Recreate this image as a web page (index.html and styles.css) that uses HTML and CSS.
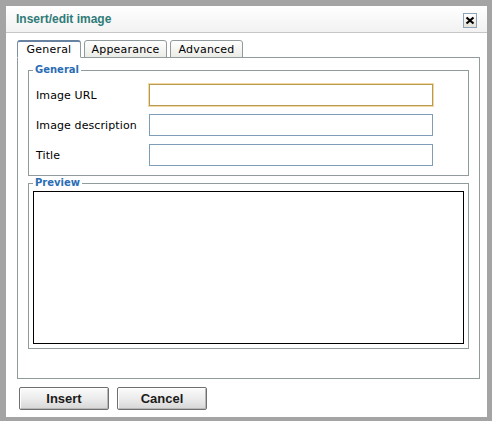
FILE: index.html
```html
<!DOCTYPE html>
<html>
<head>
<meta charset="utf-8">
<title>Insert/edit image</title>
<link rel="stylesheet" href="styles.css">
</head>
<body>
<div class="window">
  <div class="titlebar">
    <span class="title">Insert/edit image</span>
    <span class="close"><svg width="10" height="9" viewBox="0 0 10 9"><path d="M1.5 1.5 L8.5 7.5 M8.5 1.5 L1.5 7.5" stroke="#000" stroke-width="2.2" fill="none"/></svg></span>
  </div>
  <div class="body">
    <div class="tabs">
      <span class="tab tab-general active">General</span>
      <span class="tab tab-appearance">Appearance</span>
      <span class="tab tab-advanced">Advanced</span>
    </div>
    <div class="panel">
      <fieldset class="fs fs-general">
        <legend>General</legend>
        <div class="fs-body">
          <div class="row"><label>Image URL</label><input class="field focus" type="text"></div>
          <div class="row"><label>Image description</label><input class="field" type="text"></div>
          <div class="row"><label>Title</label><input class="field" type="text"></div>
        </div>
      </fieldset>
      <fieldset class="fs fs-preview-set">
        <legend>Preview</legend>
        <div class="fs-preview">
          <div class="preview-box"></div>
        </div>
      </fieldset>
    </div>
    <div class="buttons">
      <button class="btn">Insert</button>
      <button class="btn">Cancel</button>
    </div>
  </div>
</div>
</body>
</html>
```

FILE: styles.css
```css
html, body {
  margin: 0;
  padding: 0;
  background: #fff;
}
body {
  width: 494px;
  height: 424px;
  overflow: hidden;
  font-family: "DejaVu Sans", Verdana, sans-serif;
  font-size: 11px;
  color: #000;
}
.window {
  width: 481px;
  height: 411px;
  border-style: solid;
  border-color: #a4a4a4;
  border-width: 6px 5px 4px 6px;
  background: #fff;
  display: flex;
  flex-direction: column;
}
.titlebar {
  height: 26px;
  border-bottom: 1px solid #c6c6c6;
  background: linear-gradient(#ffffff, #f2f2f2);
  display: flex;
  align-items: center;
  padding: 0 10px;
}
.title {
  font-family: "Liberation Sans", Arial, sans-serif;
  font-weight: bold;
  font-size: 12px;
  color: #2f7b78;
  margin-top: -1px;
}
.close {
  margin-left: auto;
  width: 12px;
  height: 13px;
  border: 1px solid #8da3b9;
  background: linear-gradient(#ffffff, #e4e2da);
  display: flex;
  align-items: center;
  justify-content: center;
  margin-top: 2px;
}
.close svg {
  display: block;
}
.body {
  padding: 7px 7px 0 11px;
}
.tabs {
  display: flex;
  gap: 3px;
  position: relative;
  margin-bottom: -1px;
}
.tab {
  box-sizing: border-box;
  height: 18px;
  border: 1px solid #919b9c;
  border-radius: 3px 3px 0 0;
  background: linear-gradient(#ffffff, #ebebe6);
  text-align: center;
  line-height: 17px;
  letter-spacing: 0.2px;
}
.tab-general { width: 64px; }
.tab-appearance { width: 83px; }
.tab-advanced { width: 73px; }
.tab.active {
  background: #fff;
  border-top: 2px solid #6883a0;
  border-left-color: #7d91a6;
  border-bottom-color: #fff;
  line-height: 16px;
}
.panel {
  box-sizing: border-box;
  height: 322px;
  border: 1px solid #919b9c;
  background: #fff;
  padding: 0 10px;
}
.fs {
  margin: 0;
  padding: 0;
  min-width: 0;
  border: 1px solid #919b9c;
}
.fs-general {
  margin-top: 6px;
}
.fs-preview-set {
  margin-top: 1px;
}
.fs legend {
  margin-left: 4px;
  padding: 0 2px;
  font-weight: bold;
  font-size: 10px;
  line-height: 12px;
  color: #2b6db5;
}
.fs-body {
  padding: 8px 7px 9px 7px;
}
.row {
  display: flex;
  align-items: center;
  height: 22px;
  margin-bottom: 8px;
}
.row:last-child {
  margin-bottom: 0;
}
.row label {
  width: 113px;
  letter-spacing: 0.1px;
}
.field {
  box-sizing: border-box;
  width: 284px;
  height: 22px;
  margin: 0;
  padding: 0 2px;
  border: 1px solid #7f9db9;
  background: #fff;
  outline: none;
}
.field.focus {
  border-color: #b89a52;
  box-shadow: 0 0 0 1px #f0d9a4;
}
.fs-preview {
  padding: 2px 4px 4px 4px;
}
.preview-box {
  box-sizing: border-box;
  height: 153px;
  border: 1px solid #000;
  background: #fff;
}
.buttons {
  display: flex;
  gap: 8px;
  margin-top: 8px;
  padding-left: 2px;
}
.btn {
  box-sizing: border-box;
  width: 90px;
  height: 23px;
  margin: 0;
  padding: 0;
  border: 1px solid #6f6f6f;
  border-radius: 2px;
  background: linear-gradient(#fbfbfb 0%, #ececec 50%, #d6d6d6 100%);
  box-shadow: inset 1px 1px 0 #ffffff, inset -1px -1px 0 #b8b8b8;
  font-family: "Liberation Sans", Arial, sans-serif;
  font-weight: bold;
  font-size: 13px;
  color: #1a1a1a;
}
```
